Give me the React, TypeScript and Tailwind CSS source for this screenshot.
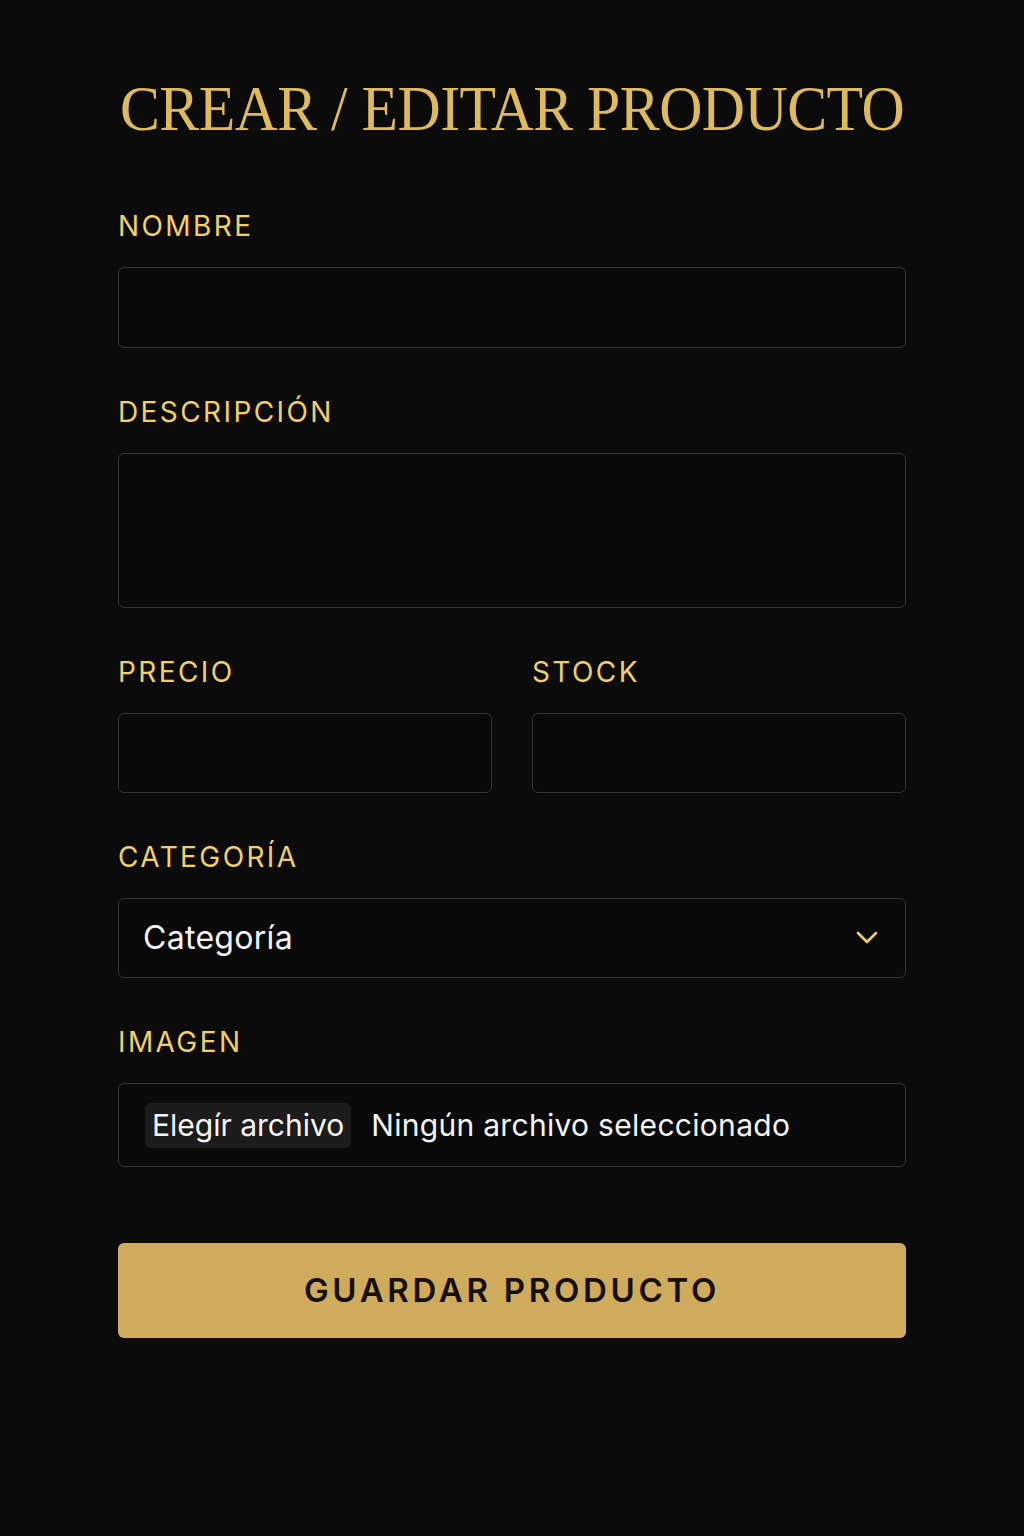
import React from 'react';

const labelCls =
  "block h-[28px] mb-[27px] text-[28px] leading-[28px] tracking-[2.4px] text-[#f2cf68] font-['Inter',sans-serif]";
const boxCls =
  'w-full rounded-md border border-[#333333] bg-[#0a0a0a] text-[#f5f5f5] outline-none';

const Field: React.FC<{ label: string; children: React.ReactNode }> = ({ label, children }) => (
  <div className="flex flex-col">
    <label className={labelCls}>{label}</label>
    {children}
  </div>
);

export default function App() {
  return (
    <div className="min-h-[1536px] w-full bg-[#0b0b0b] font-['Inter',sans-serif]">
      <form className="mx-auto w-[788px] pt-[77px]" onSubmit={(e) => e.preventDefault()}>
        <h1 className="flex h-[64px] justify-center text-[64px] leading-[64px] tracking-[-0.6px] text-[#dfba5d] font-['Liberation_Serif',serif] whitespace-nowrap scale-x-[0.935]">
          CREAR / EDITAR PRODUCTO
        </h1>

        <div className="mt-[71px] flex flex-col gap-[50px]">
          <Field label="NOMBRE">
            <input type="text" className={`${boxCls} h-[81px] px-6 text-[30px]`} />
          </Field>

          <Field label="DESCRIPCIÓN">
            <textarea className={`${boxCls} h-[155px] resize-none px-6 py-4 text-[30px]`} />
          </Field>

          <div className="grid grid-cols-2 gap-10">
            <Field label="PRECIO">
              <input type="number" className={`${boxCls} h-[80px] px-6 text-[30px]`} />
            </Field>
            <Field label="STOCK">
              <input type="number" className={`${boxCls} h-[80px] px-6 text-[30px]`} />
            </Field>
          </div>

          <Field label="CATEGORÍA">
            <div className="relative">
              <select
                defaultValue=""
                className={`${boxCls} h-[80px] appearance-none pl-6 pr-16 text-[32px] tracking-[0.3px]`}
              >
                <option value="">Categoría</option>
              </select>
              <svg
                className="pointer-events-none absolute right-[28px] top-[33px]"
                width="22"
                height="13"
                viewBox="0 0 22 13"
                fill="none"
              >
                <path d="M2 2 L11 11 L20 2" stroke="#f2cf68" strokeWidth="2.6" strokeLinecap="round" strokeLinejoin="round" />
              </svg>
            </div>
          </Field>

          <Field label="IMAGEN">
            <label className={`${boxCls} flex h-[84px] cursor-pointer items-center pl-[26px]`}>
              <input type="file" className="hidden" />
              <span className="flex h-[45px] items-center rounded-md bg-[#1c1c1c] px-[7px] text-[30px] leading-none">
                Elegír archivo
              </span>
              <span className="ml-[20px] text-[30px] leading-none tracking-[0.3px]">Ningún archivo seleccionado</span>
            </label>
          </Field>
        </div>

        <button
          type="submit"
          className="mt-[76px] flex h-[95px] w-full items-center justify-center rounded-md bg-[#d0ab5c] text-[33px] font-semibold tracking-[3.7px] text-[#15110a]"
        >
          GUARDAR PRODUCTO
        </button>
      </form>
    </div>
  );
}
